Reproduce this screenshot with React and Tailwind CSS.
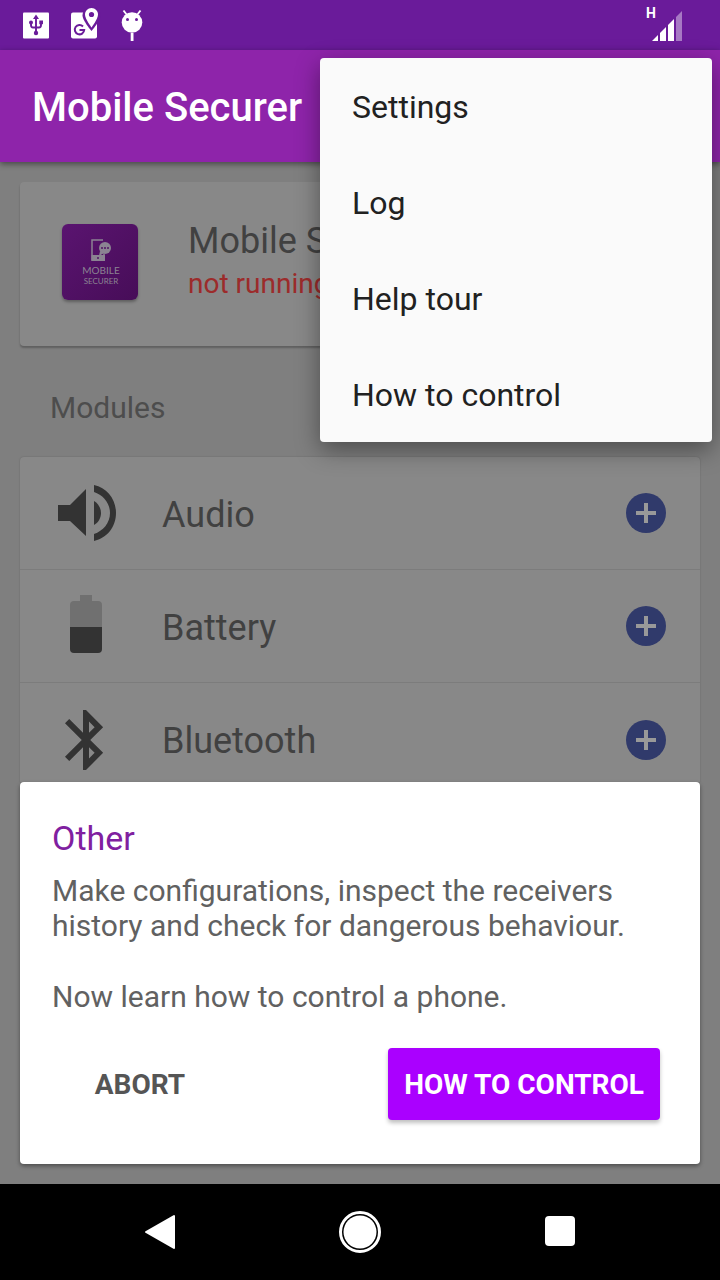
const modules = [
  { name: "Audio", icon: <AudioIcon /> },
  { name: "Battery", icon: <BatteryIcon /> },
  { name: "Bluetooth", icon: <BluetoothIcon /> },
];

const menuItems = ["Settings", "Log", "Help tour", "How to control"];

function AudioIcon() {
  return (
    <svg viewBox="0 0 72 72" className="size-18 text-[#333333]" fill="currentColor" aria-hidden="true">
      <path d="M8 28H20L36 12V59L20 44H8Z" />
      <path d="M44 24C48 26 51 31 51 36C51 41 48 46 44 48Z" />
      <path d="M44 8C57 11 66 22 66 36C66 50 57 61 44 64V57C53 54 60 46 60 36C60 26 53 18 44 15Z" />
    </svg>
  );
}

function BatteryIcon() {
  return (
    <svg viewBox="0 0 72 72" className="size-18" aria-hidden="true">
      <path d="M20 41V15Q20 11 24 11H30V5H42V11H48Q52 11 52 15V41Z" fill="#707070" />
      <path d="M20 37H52V59Q52 63 48 63H24Q20 63 20 59Z" fill="#333333" />
    </svg>
  );
}

function BluetoothIcon() {
  return (
    <svg viewBox="0 0 24 24" className="size-18 text-[#333333]" fill="currentColor" aria-hidden="true">
      <path d="M17.71 7.71 12 2h-1v7.59L6.41 5 5 6.41 10.59 12 5 17.59 6.41 19 11 14.41V22h1l5.71-5.71-4.3-4.29 4.3-4.29zM13 5.83l1.88 1.88L13 9.59V5.83zm1.88 10.46L13 18.17v-3.76l1.88 1.88z" />
    </svg>
  );
}

function StatusBar() {
  return (
    <div className="flex h-[50px] items-center justify-between bg-[#6a1b9a] pl-[22px] pr-[38px]">
      <div className="flex items-center gap-5">
        <svg viewBox="0 0 28 32" className="h-8 w-7" aria-hidden="true">
          <rect x="1" y="3.500" width="26" height="26" rx="1" fill="#fff" />
          <g fill="none" stroke="#6a1b9a" strokeWidth="1.900">
            <path d="M14 8V23M9 13V16Q9 18.500 11 18.500H17Q19 18.500 19 16V13" />
          </g>
          <path d="M14 5.500L17 10H11Z" fill="#6a1b9a" />
          <circle cx="9" cy="13.500" r="2" fill="#6a1b9a" />
          <rect x="17.300" y="11.500" width="3.700" height="3.700" fill="#6a1b9a" />
          <circle cx="14" cy="24" r="2.200" fill="#6a1b9a" />
        </svg>
        <svg viewBox="0 0 28 32" className="h-8 w-7 overflow-visible" aria-hidden="true">
          <rect x="1" y="3.500" width="26" height="26" rx="2" fill="#fff" />
          <path d="M21.500 -2.500C16.500 -2.500 12.500 1.500 12.500 6.500C12.500 11.500 21.500 22 21.500 22S30.500 11.500 30.500 6.500C30.500 1.500 26.500 -2.500 21.500 -2.500Z" fill="#6a1b9a" />
          <path d="M21.500 -1C17.800 -1 15 2 15 5.500C15 10 21.500 18.500 21.500 18.500S28 10 28 5.500C28 2 25.200 -1 21.500 -1Z" fill="#fff" />
          <circle cx="21.500" cy="5.500" r="2.600" fill="#6a1b9a" />
          <path d="M13 17.500A4.700 4.700 0 1 0 14.200 21H9.500" fill="none" stroke="#6a1b9a" strokeWidth="2" />
        </svg>
        <svg viewBox="0 0 28 32" className="h-8 w-7" fill="#fff" aria-hidden="true">
          <path d="M5.500 1.500L9 6M22.500 1.500L19 6" stroke="#fff" strokeWidth="1.900" />
          <circle cx="14" cy="13.500" r="10.300" />
          <circle cx="9.500" cy="10.500" r="1.500" fill="#6a1b9a" />
          <circle cx="18.500" cy="10.500" r="1.500" fill="#6a1b9a" />
          <rect x="12.700" y="24" width="2.800" height="8" />
        </svg>
      </div>
      <div className="flex items-start">
        <span className="-mt-1 -mr-1 text-[14px] leading-4 font-bold text-white">H</span>
        <svg viewBox="0 0 30 32" className="h-8 w-[30px]" aria-hidden="true">
          <path d="M0 32L6 26V32Z" fill="#fff" />
          <path d="M8 24L14 18V32H8Z" fill="#fff" />
          <path d="M16 16L22 10V32H16Z" fill="#fff" />
          <path d="M24 8L30 2V32H24Z" fill="#a779c4" />
        </svg>
      </div>
    </div>
  );
}

function AppLogo() {
  return (
    <svg viewBox="0 0 76 76" className="mt-[42px] size-[76px] rounded-md shadow-[0_2px_3px_rgba(0,0,0,0.3)]" role="img" aria-label="Mobile Securer">
      <defs>
        <linearGradient id="logo" x1="0" y1="0" x2="1" y2="1">
          <stop offset="0" stopColor="#5a1470" />
          <stop offset="1" stopColor="#470d58" />
        </linearGradient>
      </defs>
      <rect width="76" height="76" fill="url(#logo)" />
      <path d="M41 16H30V36H42V30" fill="none" stroke="#8b8392" strokeWidth="1.500" />
      <rect x="29.500" y="31" width="13.500" height="6" fill="#8b8392" />
      <circle cx="43" cy="24" r="6" fill="#8b8392" />
      <path d="M38 27L37 32L42 29Z" fill="#8b8392" />
      <path d="M39 24H47" stroke="#501263" strokeWidth="1.500" strokeDasharray="2 1" />
      <circle cx="36" cy="34" r="1" fill="#501263" />
      <g fill="#8b8392" fontFamily="Lato, sans-serif" textAnchor="middle">
        <text x="39" y="50" fontSize="10">MOBILE</text>
        <text x="39" y="60" fontSize="8">SECURER</text>
      </g>
    </svg>
  );
}

export default function App() {
  return (
    <div className="relative flex min-h-screen flex-col bg-[#7f7f7f] font-['Roboto',sans-serif]">
      <StatusBar />
      <header className="relative flex h-28 items-center bg-[#8e24aa] px-8 pt-1 shadow-[0_2px_6px_rgba(0,0,0,0.45)]">
        <h1 className="text-[40px] leading-[48px] font-medium text-white">Mobile Securer</h1>
      </header>

      <nav className="absolute top-[58px] right-2 z-10 flex w-[392px] flex-col rounded bg-[#fafafa] shadow-[0_8px_24px_rgba(0,0,0,0.4)]">
        {menuItems.map((item) => (
          <button key={item} type="button" className="h-24 px-8 pt-0.5 text-left text-[32px] leading-10 text-[#212121]">
            {item}
          </button>
        ))}
      </nav>

      <main className="flex grow flex-col px-5 pt-5">
        <section className="flex h-[164px] items-start gap-[50px] rounded bg-[#888888] px-[42px] shadow-[0_2px_2px_rgba(0,0,0,0.25)]">
          <AppLogo />
          <div className="pt-[37px]">
            <h2 className="text-[36px] leading-[44px] text-[#414141]">Mobile Securer</h2>
            <p className="text-[28px] leading-[42px] text-[#9c2b2b]">not running</p>
          </div>
        </section>
        <h3 className="px-[30px] pt-10 pb-[27px] text-[30px] leading-[44px] text-[#4d4d4d]">Modules</h3>
        <ul className="h-[325px] divide-y divide-[#7c7c7c] overflow-hidden rounded-t bg-[#888888] shadow-[0_0_2px_rgba(0,0,0,0.2)]">
          {modules.map(({ name, icon }) => (
            <li key={name} className="flex h-[113px] items-center pr-[34px] pl-[30px]">
              {icon}
              <span className="grow pt-[3px] pl-10 text-[36px] leading-[44px] text-[#414141]">{name}</span>
              <button type="button" aria-label={"Add " + name} className="size-10 rounded-full bg-[#303a6b]">
                <svg viewBox="0 0 40 40" aria-hidden="true">
                  <path d="M20 10V30M10 20H30" stroke="#999999" strokeWidth="4" />
                </svg>
              </button>
            </li>
          ))}
        </ul>
        <section className="mb-5 flex h-[382px] flex-col rounded bg-white px-8 pt-8 shadow-[0_2px_4px_rgba(0,0,0,0.4)]">
          <h2 className="text-[34px] leading-[48px] text-[#8020a0]">Other</h2>
          <p className="pt-[11px] text-[30px] leading-[35px] text-[#616161]">
            Make configurations, inspect the receivers history and check for dangerous behaviour.
          </p>
          <p className="pt-9 text-[30px] leading-[35px] text-[#616161]">Now learn how to control a phone.</p>
          <div className="mt-[34px] flex justify-between pr-2">
            <button type="button" className="h-[72px] w-[176px] pt-0.5 text-[28px] leading-8 font-bold text-[#555555]">ABORT</button>
            <button type="button" className="h-[72px] rounded bg-[#aa00ff] px-4 pt-0.5 text-[28px] leading-8 font-bold text-white shadow-[0_3px_4px_rgba(0,0,0,0.25)]">
              HOW TO CONTROL
            </button>
          </div>
        </section>
      </main>

      <nav className="flex h-24 items-center justify-around bg-black px-[60px]" aria-label="System navigation">
        <button type="button" aria-label="Back">
          <svg viewBox="0 0 48 48" className="size-12" aria-hidden="true">
            <path d="M10 24L38 8V40Z" fill="#fff" stroke="#fff" strokeWidth="2" strokeLinejoin="round" />
          </svg>
        </button>
        <button type="button" aria-label="Home">
          <svg viewBox="0 0 48 48" className="size-12" aria-hidden="true">
            <circle cx="24" cy="24" r="19.500" fill="none" stroke="#fff" strokeWidth="3" />
            <circle cx="24" cy="24" r="16.500" fill="#fff" />
          </svg>
        </button>
        <button type="button" aria-label="Recent apps">
          <svg viewBox="0 0 48 48" className="size-12" aria-hidden="true">
            <rect x="9" y="8" width="30" height="30" rx="4" fill="#fff" />
          </svg>
        </button>
      </nav>
    </div>
  );
}
